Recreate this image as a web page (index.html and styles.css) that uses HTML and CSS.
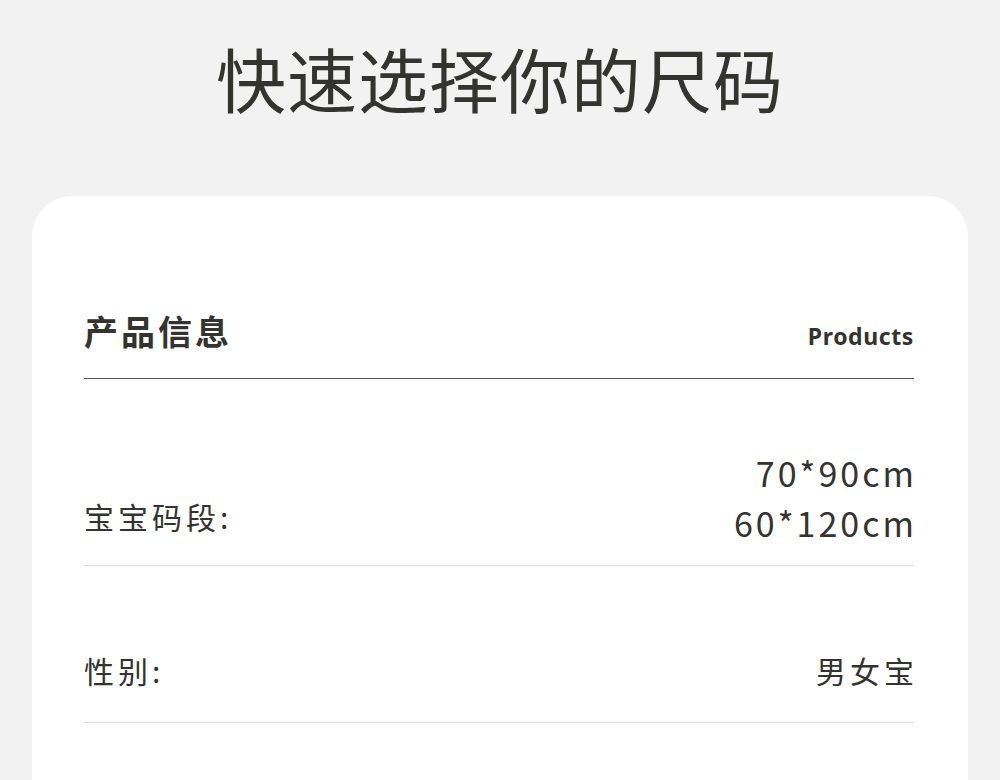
FILE: index.html
```html
<!DOCTYPE html>
<html lang="zh-CN">
<head>
    <meta charset="UTF-8">
    <meta name="viewport" content="width=device-width, initial-scale=1.0">
    <title>快速选择你的尺码</title>
    <link rel="stylesheet" href="styles.css">
</head>
<body>
    <!-- Heading -->
    <h1 class="page-title">快速选择你的尺码</h1>

    <!-- Product info card -->
    <div class="card">
        <div class="card-head">
            <h2>产品信息</h2>
            <span class="head-en">Products</span>
        </div>

        <div class="row row-size">
            <span class="label">宝宝码段:</span>
            <div class="value">
                <div>70*90cm</div>
                <div>60*120cm</div>
            </div>
        </div>

        <div class="row row-gender">
            <span class="label">性别:</span>
            <div class="value">男女宝</div>
        </div>
    </div>
</body>
</html>
```

FILE: styles.css
```css
body {
    margin: 0;
    padding: 0 32px;
    background-color: #f2f2f2;
    color: #33332f;
    font-family: "Noto Sans CJK SC", "Noto Sans", sans-serif;
}

.page-title {
    margin: 0;
    padding-top: 38px;
    height: 80px;
    line-height: 80px;
    font-size: 70px;
    font-weight: 400;
    text-align: center;
    letter-spacing: 1px;
}

.card {
    margin-top: 78px;
    background-color: #fff;
    border-radius: 40px;
    padding: 115px 54px 0 52px;
    min-height: 600px;
}

.card-head {
    display: flex;
    justify-content: space-between;
    align-items: baseline;
    padding-bottom: 26px;
    border-bottom: 1px solid #555;
}

.card-head h2 {
    margin: 0;
    font-size: 34px;
    line-height: 40px;
    font-weight: 700;
    letter-spacing: 3px;
}

.head-en {
    font-family: "Noto Sans", sans-serif;
    font-size: 23px;
    font-weight: 700;
    letter-spacing: 0.6px;
}

.row {
    display: flex;
    justify-content: space-between;
    align-items: flex-end;
    border-bottom: 1px solid #ddd;
}

.label,
.value {
    font-size: 30px;
    line-height: 40px;
    letter-spacing: 4px;
}

.value {
    text-align: right;
    margin-right: -4px;
}

.row-size {
    padding: 69px 0 17px;
}

.row-size .value {
    font-size: 34px;
    line-height: 50px;
    letter-spacing: 3px;
    margin-right: -3px;
}

.row-size .label {
    margin-bottom: 12px;
}

.row-gender {
    padding: 84px 0 32px;
}
```
